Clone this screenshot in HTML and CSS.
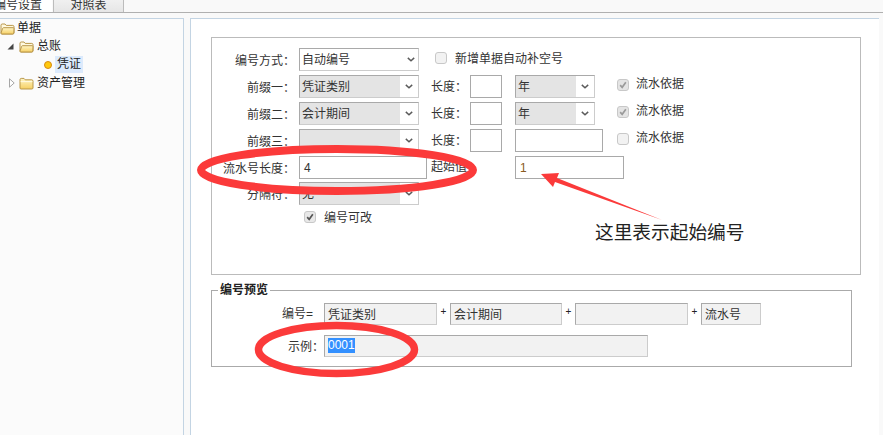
FILE: index.html
```html
<!DOCTYPE html>
<html lang="zh-CN">
<head>
<meta charset="utf-8">
<title>编号设置</title>
<link rel="stylesheet" href="styles.css">
</head>
<body>
<svg width="0" height="0" class="defs">
  <defs>
    <linearGradient id="fg" x1="0" y1="0" x2="0" y2="1">
      <stop offset="0" stop-color="#fff6c8"/>
      <stop offset="1" stop-color="#f6cf62"/>
    </linearGradient>
    <symbol id="folder-open" viewBox="0 0 15 13">
      <path d="M1 11V3.2C1 2.5 1.5 2 2.2 2H5l1.2 1.4h6.6c.7 0 1.2.5 1.2 1.2V11c0 .7-.5 1-1.2 1H2c-.7 0-1-.4-1-1z" fill="#fff9e0" stroke="#b9974a"/>
      <path d="M1 11.2 2.6 6.4c.2-.5.5-.7 1-.7h9.6c.6 0 1 .4.8 1L13.8 11c-.2.7-.6 1-1.2 1H2c-.7 0-1-.3-1-.8z" fill="url(#fg)" stroke="#b9974a"/>
    </symbol>
    <symbol id="folder-closed" viewBox="0 0 15 13">
      <path d="M1 11V2.6C1 1.9 1.5 1.4 2.2 1.4H5l1.2 1.4h6.6c.7 0 1.2.5 1.2 1.2V11c0 .7-.5 1-1.2 1H2c-.7 0-1-.4-1-1z" fill="url(#fg)" stroke="#b9974a"/>
      <path d="M1.6 4.6h11.8" stroke="#fffbe6" fill="none"/>
    </symbol>
    <symbol id="chev" viewBox="0 0 10 6">
      <path d="M1 1l4 3.6L9 1" fill="none" stroke="#5a5a5a" stroke-width="1.8"/>
    </symbol>
    <symbol id="tick" viewBox="0 0 12 12">
      <path d="M2.6 6.2 5 8.8l4.4-6" fill="none" stroke="currentColor" stroke-width="2"/>
    </symbol>
  </defs>
</svg>

<div class="tabs">
  <div class="tab tab-active">编号设置</div>
  <div class="tab tab-idle">对照表</div>
</div>

<div class="main">
  <aside class="tree">
    <div class="tree-row level0">
      <svg class="folder"><use href="#folder-open"/></svg>
      <span class="tree-text">单据</span>
    </div>
    <div class="tree-row level1">
      <span class="toggle"><svg width="7" height="7" viewBox="0 0 7 7"><path d="M6.5 0.5V6.5H0.5z" fill="#454545"/></svg></span>
      <svg class="folder"><use href="#folder-open"/></svg>
      <span class="tree-text">总账</span>
    </div>
    <div class="tree-row level2">
      <span class="dot"></span>
      <span class="tree-text tree-selected">凭证</span>
    </div>
    <div class="tree-row level1b">
      <span class="toggle"><svg width="6" height="10" viewBox="0 0 6 10"><path d="M.5 .8 5.2 5 .5 9.2z" fill="#fff" stroke="#a6a6a6"/></svg></span>
      <svg class="folder"><use href="#folder-closed"/></svg>
      <span class="tree-text">资产管理</span>
    </div>
  </aside>

  <section class="content">
    <div class="form-box">
      <div class="row">
        <label class="lbl">编号方式<span class="colon">：</span></label>
        <div class="sel sel-main sel-white"><span class="sel-val">自动编号</span><span class="sel-arrow"><svg class="chev"><use href="#chev"/></svg></span></div>
        <span class="check check-first"></span>
        <span class="check-text">新增单据自动补空号</span>
      </div>
      <div class="row">
        <label class="lbl">前缀一<span class="colon">：</span></label>
        <div class="sel sel-main"><span class="sel-val">凭证类别</span><span class="sel-arrow"><svg class="chev"><use href="#chev"/></svg></span></div>
        <span class="len-lbl">长度<span class="colon">：</span></span>
        <span class="box len-box"></span>
        <div class="sel sel-year"><span class="sel-val">年</span><span class="sel-arrow"><svg class="chev"><use href="#chev"/></svg></span></div>
        <span class="check check-flow check-on"><svg class="tick"><use href="#tick"/></svg></span>
        <span class="check-text">流水依据</span>
      </div>
      <div class="row">
        <label class="lbl">前缀二<span class="colon">：</span></label>
        <div class="sel sel-main"><span class="sel-val">会计期间</span><span class="sel-arrow"><svg class="chev"><use href="#chev"/></svg></span></div>
        <span class="len-lbl">长度<span class="colon">：</span></span>
        <span class="box len-box"></span>
        <div class="sel sel-year"><span class="sel-val">年</span><span class="sel-arrow"><svg class="chev"><use href="#chev"/></svg></span></div>
        <span class="check check-flow check-on"><svg class="tick"><use href="#tick"/></svg></span>
        <span class="check-text">流水依据</span>
      </div>
      <div class="row">
        <label class="lbl">前缀三<span class="colon">：</span></label>
        <div class="sel sel-main"><span class="sel-val"></span><span class="sel-arrow"><svg class="chev"><use href="#chev"/></svg></span></div>
        <span class="len-lbl">长度<span class="colon">：</span></span>
        <span class="box len-box"></span>
        <span class="box year-box"></span>
        <span class="check check-flow-b"></span>
        <span class="check-text">流水依据</span>
      </div>
      <div class="row">
        <label class="lbl">流水号长度<span class="colon">：</span></label>
        <span class="box serial-box">4</span>
        <span class="start-lbl">起始值</span>
        <span class="box start-box">1</span>
      </div>
      <div class="row row-tight">
        <label class="lbl">分隔符<span class="colon">：</span></label>
        <div class="sel sel-main"><span class="sel-val">无</span><span class="sel-arrow"><svg class="chev"><use href="#chev"/></svg></span></div>
      </div>
      <div class="row-check">
        <span class="check check-dark"><svg class="tick"><use href="#tick"/></svg></span>
        <span class="check-text">编号可改</span>
      </div>
    </div>

    <fieldset class="preview">
      <legend class="preview-title">编号预览</legend>
      <div class="pv-row">
        <span class="pv-lbl">编号=</span>
        <span class="field f-a">凭证类别</span>
        <span class="plus">+</span>
        <span class="field f-b">会计期间</span>
        <span class="plus">+</span>
        <span class="field f-c"></span>
        <span class="plus">+</span>
        <span class="field f-d">流水号</span>
      </div>
      <div class="pv-row">
        <span class="pv-lbl">示例<span class="colon">：</span></span>
        <span class="field f-long"><span class="selected-text">0001</span></span>
      </div>
    </fieldset>
  </section>
</div>

<svg class="marks" width="883" height="435" viewBox="0 0 883 435">
  <ellipse cx="337" cy="170" rx="136" ry="21" fill="none" stroke="#fb3a3a" stroke-width="8"/>
  <ellipse cx="336.5" cy="349.5" rx="78" ry="24" fill="none" stroke="#fb3a3a" stroke-width="7.5"/>
  <path d="M541 174 559 173 557 178 662 220 555 182 553 187z" fill="#fb3a3a"/>
  <text class="note" x="595" y="239">这里表示起始编号</text>
</svg>
</body>
</html>
```

FILE: styles.css
```css
* { box-sizing: border-box; }
html, body { margin: 0; padding: 0; }
body {
  position: relative;
  width: 883px;
  height: 435px;
  overflow: hidden;
  background: #f9f9f9;
  color: #333;
  font: 12px/1.2 "Liberation Sans", "Noto Sans CJK SC", sans-serif;
}
.defs { position: absolute; }
.colon { font-family: "Noto Sans CJK TC", sans-serif; }

.tabs {
  display: flex;
  align-items: flex-end;
  height: 13px;
  overflow: hidden;
  border-bottom: 1px solid #b0b0b0;
}
.tab {
  flex: none;
  height: 24px;
  line-height: 34px;
  text-align: center;
}
.tab-active {
  width: 58px;
  margin-left: -6px;
  padding-right: 10px;
  background: #fff;
}
.tab-idle {
  width: 71px;
  margin-left: 1px;
  border-left: 1px solid #bcbcbc;
  border-right: 1px solid #bcbcbc;
  background: linear-gradient(#fafafa, #e6e6e6);
}

.main {
  display: flex;
  gap: 6px;
  height: 417px;
  margin-top: 5px;
}
.tree {
  flex: none;
  width: 184px;
  border-top: 1px solid #c3d4e3;
  border-right: 1px solid #c3d4e3;
  background: #fbfbfb;
}
.tree-row {
  display: flex;
  align-items: center;
  height: 18.3px;
  color: #222;
}
.level0 { padding-left: 0; }
.level1 { padding-left: 7px; }
.level1b { padding-left: 9px; }
.level2 { padding-left: 44px; }
.toggle {
  display: flex;
  align-items: center;
  flex: none;
  width: 12px;
}
.level1b .toggle { width: 10px; }
.folder { flex: none; width: 15px; height: 13px; margin-right: 3px; }
.level0 .folder { margin-right: 2px; }
.dot {
  flex: none;
  width: 8px;
  height: 8px;
  margin-right: 3px;
  border: 1px solid #d78a12;
  border-radius: 50%;
  background: #ffc90e;
}
.tree-selected {
  height: 17px;
  padding: 0 2px;
  line-height: 17px;
  background: #dceafc;
}

.content {
  flex: none;
  width: 689px;
  padding: 18px 0 0 20px;
  border-top: 1px solid #c3d4e3;
  border-left: 1px solid #c3d4e3;
  background: #fff;
}

.form-box {
  display: flex;
  flex-direction: column;
  gap: 4px;
  width: 650px;
  height: 238px;
  padding-top: 10px;
  border: 1px solid #bbb;
}
.row { display: flex; align-items: center; height: 23px; }
.row-tight { margin-top: -1px; }
.lbl {
  flex: none;
  width: 87px;
  padding: 2px 4px 0 0;
  text-align: right;
}
.sel {
  display: flex;
  flex: none;
  height: 23px;
  border: 1px solid;
  border-color: #a9a9a9 #ccc #ccc #a9a9a9;
  background: #fff;
}
.sel-main { width: 120px; }
.sel-year { width: 80px; }
.sel-val {
  flex: 1;
  padding-left: 2px;
  line-height: 23px;
  background: #e4e4e4;
}
.sel-white .sel-val { background: #fff; }
.sel-arrow {
  display: flex;
  align-items: center;
  justify-content: center;
  flex: none;
  width: 18px;
}
.sel-white .sel-arrow { width: 14px; padding-right: 1px; }
.chev { width: 8px; height: 5px; }

.check {
  display: flex;
  align-items: center;
  justify-content: center;
  flex: none;
  width: 12px;
  height: 12px;
  border: 1px solid #c8c8c8;
  border-radius: 3px;
  background: #f2f2f2;
}
.check-first { margin: -3px 8px 0 16px; }
.check-flow { margin: -4px 7px 0 22px; }
.check-flow-b { margin: -4px 7px 0 14px; }
.check-on { color: #9a9a9a; background: #e4e4e4; }
.check-dark { margin-right: 8px; color: #555; background: #e8e8e8; }
.tick { width: 10px; height: 10px; }
.check-text { white-space: nowrap; }
.check-first + .check-text { margin-top: -1px; }
.check-flow + .check-text, .check-flow-b + .check-text { margin-top: -4px; }

.len-lbl { flex: none; width: 39px; margin-left: 12px; }
.box {
  flex: none;
  height: 23px;
  padding-left: 4px;
  border: 1px solid #a9a9a9;
  line-height: 23px;
  background: #fff;
}
.len-box { width: 32px; margin-right: 13px; }
.year-box { width: 88px; }
.serial-box { width: 128px; }
.start-lbl { flex: none; width: 88px; padding-left: 4px; }
.start-box { width: 109px; color: #8a5a20; }
.row-check {
  display: flex;
  align-items: center;
  height: 16px;
  padding-left: 92px;
}
.row-check .check-text { padding-top: 2px; }

.preview {
  width: 641px;
  height: 85px;
  margin: 7px 0 0;
  padding: 5px 0 0 0;
  border: 1px solid #aaa;
  min-width: 0;
}
.preview-title {
  margin-left: 6px;
  padding: 1px 2px 0;
  color: #222;
  font-weight: bold;
  line-height: 15px;
}
.pv-row {
  display: flex;
  align-items: center;
  height: 22px;
  margin-bottom: 10px;
}
.pv-lbl {
  flex: none;
  width: 112px;
  padding: 1px 11px 0 0;
  text-align: right;
}
.pv-row:last-child .pv-lbl { padding-right: 0; }
.field {
  flex: none;
  height: 22px;
  padding-left: 3px;
  border: 1px solid;
  border-color: #a9a9a9 #ccc #ccc #a9a9a9;
  line-height: 22px;
  background: #f2f2f2;
}
.f-a { width: 113px; }
.f-b { width: 112px; }
.f-c { width: 113px; }
.f-d { width: 60px; }
.f-long { width: 324px; }
.plus {
  flex: none;
  width: 13px;
  margin-top: -4px;
  color: #222;
  font-size: 10px;
  text-align: center;
}
.selected-text {
  display: inline-block;
  vertical-align: top;
  margin-top: 2px;
  background: #3390ff;
  color: #fff;
  line-height: 15px;
}

.marks {
  position: absolute;
  top: 0;
  left: 0;
  pointer-events: none;
}
.note {
  fill: #222;
  font-family: "Noto Sans CJK SC", sans-serif;
  font-size: 18.7px;
}
```
